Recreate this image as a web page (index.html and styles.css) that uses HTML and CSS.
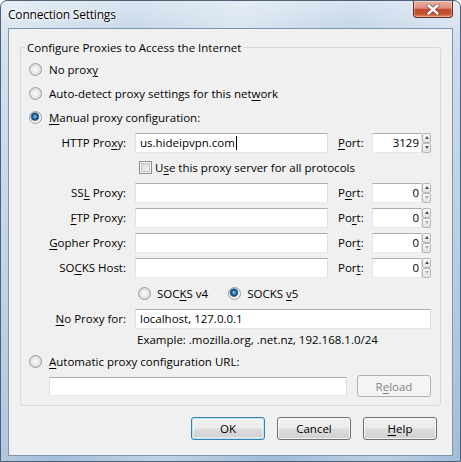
FILE: index.html
```html
<!DOCTYPE html>
<html lang="en">
<head>
<meta charset="utf-8">
<title>Connection Settings</title>
<link rel="stylesheet" href="styles.css">
</head>
<body>
<div class="window">
  <div class="titlebar">
    <span class="title">Connection Settings</span>
    <div class="close">
      <svg width="14" height="11" viewBox="0 0 14 11">
        <path d="M2.5 1.5 L11.5 9.5 M11.5 1.5 L2.5 9.5" stroke="#5a2418" stroke-width="4" stroke-linecap="round" opacity="0.55"/>
        <path d="M2.5 1.5 L11.5 9.5 M11.5 1.5 L2.5 9.5" stroke="#ffffff" stroke-width="2.4" stroke-linecap="round"/>
      </svg>
    </div>
  </div>
  <div class="client">
    <fieldset class="group">
      <legend>Configure Proxies to Access the Internet</legend>
      <div class="opt h23"><span class="radio"></span><span>No prox<u>y</u></span></div>
      <div class="opt h24"><span class="radio"></span><span>Auto-detect proxy settings for this net<u>w</u>ork</span></div>
      <div class="opt h25"><span class="radio on"></span><span><u>M</u>anual proxy configuration:</span></div>

      <div class="grid">
        <span class="lbl">HTTP Pro<u>x</u>y:</span>
        <div class="tb">us.hideipvpn.com<span class="caret"></span></div>
        <span class="plbl"><u>P</u>ort:</span>
        <div class="port"><div class="tb num">3129</div><div class="spin"><span class="sb"><i class="up"></i></span><span class="sb"><i class="dn"></i></span></div></div>

        <div class="checkrow"><span class="check"></span><span>U<u>s</u>e this proxy server for all protocols</span></div>

        <span class="lbl">SS<u>L</u> Proxy:</span>
        <div class="tb"></div>
        <span class="plbl">P<u>o</u>rt:</span>
        <div class="port"><div class="tb num">0</div><div class="spin"><span class="sb"><i class="up"></i></span><span class="sb"><i class="dn off"></i></span></div></div>

        <span class="lbl"><u>F</u>TP Proxy:</span>
        <div class="tb"></div>
        <span class="plbl">Po<u>r</u>t:</span>
        <div class="port"><div class="tb num">0</div><div class="spin"><span class="sb"><i class="up"></i></span><span class="sb"><i class="dn off"></i></span></div></div>

        <span class="lbl"><u>G</u>opher Proxy:</span>
        <div class="tb"></div>
        <span class="plbl">Por<u>t</u>:</span>
        <div class="port"><div class="tb num">0</div><div class="spin"><span class="sb"><i class="up"></i></span><span class="sb"><i class="dn off"></i></span></div></div>

        <span class="lbl">SO<u>C</u>KS Host:</span>
        <div class="tb"></div>
        <span class="plbl">Por<u>t</u>:</span>
        <div class="port"><div class="tb num">0</div><div class="spin"><span class="sb"><i class="up"></i></span><span class="sb"><i class="dn off"></i></span></div></div>

        <div class="socksrow">
          <span class="radio sm"></span><span class="v4">SOC<u>K</u>S v4</span>
          <span class="radio sm on"></span><span>SOCKS <u>v</u>5</span>
        </div>

        <span class="lbl"><u>N</u>o Proxy for:</span>
        <div class="tb wide">localhost, 127.0.0.1</div>

        <div class="example">Example: .mozilla.org, .net.nz, 192.168.1.0/24</div>
      </div>

      <div class="opt h24"><span class="radio"></span><span><u>A</u>utomatic proxy configuration URL:</span></div>
      <div class="urlrow">
        <div class="tb url"></div>
        <div class="btn disabled">R<u>e</u>load</div>
      </div>
    </fieldset>

    <div class="buttons">
      <div class="btn default">OK</div>
      <div class="btn">Cancel</div>
      <div class="btn"><u>H</u>elp</div>
    </div>
  </div>
</div>
</body>
</html>
```

FILE: styles.css
```css
* { box-sizing: border-box; }

body {
  margin: 0;
  font-family: "Open Sans", "Noto Sans", sans-serif;
  font-size: 11.5px;
  color: #000;
  background: #fff;
}

u {
  text-decoration-thickness: 1px;
  text-underline-offset: 2px;
}

.window {
  width: 461px;
  height: 462px;
  border: 1px solid #4d6277;
  border-radius: 7px 7px 0 0;
  background:
    linear-gradient(100deg, rgba(255,255,255,0.45) 0%, rgba(255,255,255,0.12) 25%, rgba(255,255,255,0.4) 45%, rgba(255,255,255,0.08) 65%, rgba(255,255,255,0.35) 85%, rgba(255,255,255,0.1) 100%),
    linear-gradient(180deg, #d4e1ee 0%, #b4cbe2 10%, #a2bedb 60%, #97b5d5 100%);
  display: flex;
  flex-direction: column;
  overflow: hidden;
}

.titlebar {
  height: 27px;
  display: flex;
  align-items: flex-start;
  flex: none;
}

.title {
  margin: 6px 0 0 7px;
  line-height: 15px;
  font-size: 12px;
  letter-spacing: -0.2px;
  text-shadow: 0 0 6px #fff, 0 0 3px #fff, 0 0 2px #fff;
}

.close {
  margin-left: auto;
  margin-right: 7px;
  width: 40px;
  height: 17px;
  border: 1px solid #6a2a1e;
  border-top: none;
  border-radius: 0 0 4px 4px;
  background: linear-gradient(180deg, #eab2a3 0%, #dd8d78 45%, #c44a32 52%, #c3502f 78%, #de8a62 100%);
  box-shadow: inset 0 0 0 1px rgba(255,255,255,0.35);
  display: flex;
  align-items: center;
  justify-content: center;
}

.client {
  flex: 1;
  margin: 0 7px 5px 7px;
  border: 1px solid #8095aa;
  background: #f0f0f0;
  display: flex;
  flex-direction: column;
}

.group {
  margin: 11px 11px 0 11px;
  padding: 3px 0 6px 0;
  border: 1px solid #d0dae2;
  border-radius: 3px;
  min-inline-size: 0;
}

.group legend {
  margin-left: 4px;
  padding: 0 2px;
  line-height: 15px;
}

.opt {
  display: flex;
  align-items: center;
  gap: 7px;
  padding-left: 8px;
}
.h23 { height: 23px; }
.h24 { height: 24px; }
.h25 { height: 25px; }

.radio {
  width: 13px;
  height: 13px;
  flex: none;
  border-radius: 50%;
  border: 1px solid #9c9c9c;
  background: radial-gradient(circle at 50% 50%, #fbfbfb 0, #f0f0f0 2.5px, #d9d9d9 5.5px);
}
.radio.on {
  background: radial-gradient(circle at 45% 42%, #9fdcff 0, #3c8ac4 1.5px, #14456f 3.2px, #5b86ad 4px, #e4e4e4 4.6px, #f4f4f4 5.5px);
}

.grid {
  display: grid;
  grid-template-columns: 114px 193px 44px 59px;
  grid-template-rows: 25px 25px 25px 25px 25px 25px 26px 25px 18px;
  align-items: center;
}

.lbl {
  text-align: right;
  padding-right: 9px;
  white-space: nowrap;
}

.plbl {
  padding-left: 10px;
}

.tb {
  height: 20px;
  border: 1px solid;
  border-color: #abadb3 #dbdfe6 #e3e9ef #e2e3ea;
  background: #fff;
  padding: 0 4px 0 4px;
  display: flex;
  align-items: center;
  white-space: nowrap;
  overflow: hidden;
}

.caret {
  width: 1px;
  height: 14px;
  background: #000;
  margin-left: 1px;
}

.port {
  display: flex;
  align-items: center;
}

.tb.num {
  width: 50px;
  justify-content: flex-end;
  padding-right: 2px;
}

.spin {
  width: 9px;
  height: 20px;
  display: flex;
  flex-direction: column;
}

.sb {
  flex: 1;
  border: 1px solid #b7b7b7;
  border-radius: 2px;
  background: linear-gradient(180deg, #fafafa, #e2e2e2);
  display: flex;
  align-items: center;
  justify-content: center;
}

.sb i {
  width: 0;
  height: 0;
  border-left: 2.5px solid transparent;
  border-right: 2.5px solid transparent;
}
.sb i.up { border-bottom: 3px solid #555; }
.sb i.dn { border-top: 3px solid #555; }
.sb i.dn.off { border-top-color: #aaa; }

.checkrow {
  grid-column: 2 / 5;
  display: flex;
  align-items: center;
  gap: 3px;
  padding-left: 4px;
}

.check {
  width: 13px;
  height: 13px;
  flex: none;
  border: 1px solid #8f8f8f;
  background: #f4f4f4;
  box-shadow: inset 0 0 0 1px #f4f4f4, inset 0 0 0 2px #c4c4c4;
  background-image: linear-gradient(135deg, #d2d2d2, #f8f8f8);
}

.socksrow {
  grid-column: 2 / 5;
  display: flex;
  align-items: center;
  gap: 6px;
  padding-left: 3px;
}
.socksrow .v4 { margin-right: 14px; }

.tb.wide { grid-column: 2 / 5; }

.example {
  grid-column: 2 / 5;
  padding-left: 2px;
  line-height: 18px;
}

.urlrow {
  height: 26px;
  display: flex;
  align-items: center;
  gap: 10px;
  padding-left: 28px;
}

.tb.url {
  width: 298px;
  height: 19px;
}

.btn {
  width: 74px;
  height: 23px;
  border: 1px solid #707070;
  border-radius: 3px;
  background: linear-gradient(180deg, #f2f2f2 0%, #ebebeb 48%, #dddddd 52%, #cfcfcf 100%);
  box-shadow: inset 0 0 0 1px rgba(255,255,255,0.75);
  display: flex;
  align-items: center;
  justify-content: center;
  flex: none;
}

.btn.default {
  border-color: #3c7fb1;
  box-shadow: inset 0 0 0 1px #b6e7f8, inset 0 0 0 2px rgba(255,255,255,0.5);
}

.btn.disabled {
  height: 22px;
  border-color: #adb2b5;
  background: #f4f4f4;
  box-shadow: none;
  color: #838383;
}

.buttons {
  display: flex;
  justify-content: flex-end;
  gap: 12px;
  margin-top: 11px;
  padding-right: 15px;
}
```
